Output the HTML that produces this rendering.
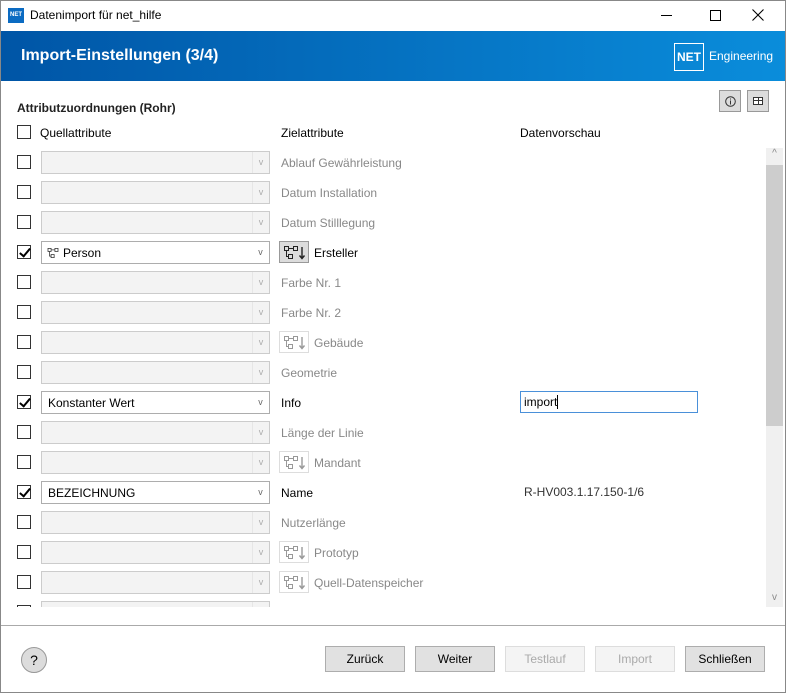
<!DOCTYPE html>
<html><head><meta charset="utf-8"><style>
*{box-sizing:border-box;margin:0;padding:0}
html,body{width:786px;height:693px;overflow:hidden}
body{position:relative;background:#fff;font-family:"Liberation Sans",sans-serif;font-size:12px;color:#000}
.a{position:absolute}
.win{left:0;top:0;width:786px;height:693px;border:1px solid #888}
.cb{position:absolute;left:17px;width:14px;height:14px;border:1px solid #333;background:#fff}
.cb.on::after{content:"";position:absolute;left:4px;top:0px;width:4px;height:9px;border:solid #000;border-width:0 2px 2px 0;transform:rotate(40deg)}
.combo{position:absolute;left:41px;width:229px;height:23px;border:1px solid #ccc;background:#f3f3f3}
.combo .arr{position:absolute;right:0;top:0;width:17px;height:21px;border-left:1px solid #e6e6e6;color:#aaa;font-size:9px;text-align:center;line-height:21px}
.combo.en{border-color:#adadad;background:#fff}
.combo.en .arr{border-left:none;color:#666}
.combo span.t{position:absolute;left:6px;top:4px;font-size:12px}
.lbl{position:absolute;font-size:12px;color:#888}
.lbl.en{color:#000}
.ib{position:absolute;left:279px;width:30px;height:22px;border:1px solid #ddd;background:#fff}
.ib.en{border-color:#999;background:#dcdcdc}
.btn{position:absolute;top:646px;width:80px;height:26px;border:1px solid #adadad;background:#e1e1e1;text-align:center;line-height:24px;font-size:12px}
.btn.dis{background:#f4f4f4;border-color:#ddd;color:#aaa}
</style></head><body>
<div class="a win"></div>
<div class="a" style="left:8px;top:8px;width:16px;height:15px;background:#0b6bc2;color:#fff;font-size:6px;font-weight:bold;line-height:15px;text-align:center">NET</div>
<div class="a" style="left:30px;top:8px;font-size:12px">Datenimport für net_hilfe</div>
<div class="a" style="left:661px;top:15px;width:11px;height:1px;background:#000"></div>
<div class="a" style="left:710px;top:10px;width:11px;height:11px;border:1px solid #000"></div>
<svg class="a" style="left:752px;top:9px" width="12" height="12"><path d="M0.5 0.5L11.5 11.5M11.5 0.5L0.5 11.5" stroke="#000" stroke-width="1.1"/></svg>
<div class="a" style="left:1px;top:31px;width:784px;height:50px;background:linear-gradient(90deg,#0055a6,#0a8ddb)"></div>
<div class="a" style="left:21px;top:47px;color:#fff;font-size:16px;font-weight:bold">Import-Einstellungen (3/4)</div>
<div class="a" style="left:674px;top:43px;width:30px;height:28px;border:1px solid #fff;color:#fff;font-weight:bold;font-size:12px;text-align:center;line-height:26px">NET</div>
<div class="a" style="left:709px;top:49px;color:#fff;font-size:12px">Engineering</div>
<div class="a" style="left:17px;top:101px;font-weight:bold;font-size:12px;color:#222">Attributzuordnungen (Rohr)</div>
<div class="a" style="left:719px;top:90px;width:22px;height:22px;border:1px solid #999;background:#dcdcdc"><svg class="a" style="left:5px;top:5px" width="11" height="11"><circle cx="5.5" cy="5.5" r="4.8" fill="none" stroke="#333"/><path d="M5.5 4.5V8.5M5.5 2.5V3.5" stroke="#333"/></svg></div>
<div class="a" style="left:747px;top:90px;width:22px;height:22px;border:1px solid #999;background:#dcdcdc"><div class="a" style="left:5px;top:6px;width:10px;height:8px;border:1px solid #333;background:linear-gradient(#333,#333) 4px 0/1px 8px no-repeat,linear-gradient(#333,#333) 0 2px/10px 1px no-repeat,#fff"></div></div>
<div class="cb" style="top:125px"></div>
<div class="a" style="left:40px;top:126px">Quellattribute</div>
<div class="a" style="left:281px;top:126px">Zielattribute</div>
<div class="a" style="left:520px;top:126px">Datenvorschau</div>
<div class="a" style="left:766px;top:148px;width:17px;height:459px;background:#f0f0f0"></div>
<div class="a" style="left:766px;top:165px;width:17px;height:261px;background:#cdcdcd"></div>
<div class="a" style="left:766px;top:148px;width:17px;text-align:center;color:#888;font-size:10px">^</div>
<div class="a" style="left:766px;top:592px;width:17px;text-align:center;color:#888;font-size:10px">v</div>
<div class="a" style="left:0;top:148px;width:766px;height:459px;overflow:hidden">
<div class="a" style="left:0;top:-148px;width:766px;height:640px">
<svg width="0" height="0" style="position:absolute"><defs><g id="hi"><rect x="0.5" y="0.5" width="4" height="4" fill="none" stroke="currentColor"/><rect x="9.5" y="0.5" width="4" height="4" fill="none" stroke="currentColor"/><rect x="4.5" y="8.5" width="4" height="4" fill="none" stroke="currentColor"/><path d="M4.5 2.5H9.5M2.5 4.5V10.5H4.5" fill="none" stroke="currentColor"/><path d="M18 1V12M15.5 9.5L18 12.5L20.5 9.5" fill="none" stroke="currentColor" stroke-width="1.4"/></g></defs></svg>
<div class="cb" style="top:155px"></div><div class="combo" style="top:151px"><div class="arr">v</div></div><div class="lbl" style="left:281px;top:156px">Ablauf Gewährleistung</div>
<div class="cb" style="top:185px"></div><div class="combo" style="top:181px"><div class="arr">v</div></div><div class="lbl" style="left:281px;top:186px">Datum Installation</div>
<div class="cb" style="top:215px"></div><div class="combo" style="top:211px"><div class="arr">v</div></div><div class="lbl" style="left:281px;top:216px">Datum Stilllegung</div>
<div class="cb on" style="top:245px"></div><div class="combo en" style="top:241px"><svg class="a" style="left:5px;top:6px;color:#333" width="12" height="10" viewBox="0 0 14 13"><rect x="0.5" y="0.5" width="4" height="4" fill="none" stroke="currentColor"/><rect x="9.5" y="0.5" width="4" height="4" fill="none" stroke="currentColor"/><rect x="4.5" y="8.5" width="4" height="4" fill="none" stroke="currentColor"/><path d="M4.5 2.5H9.5M2.5 4.5V10.5H4.5" fill="none" stroke="currentColor"/></svg><span class="t" style="left:21px">Person</span><div class="arr">v</div></div>
<div class="ib en" style="top:241px"><svg class="a" style="left:4px;top:4px;color:#222" width="22" height="14"><use href="#hi"/></svg></div><div class="lbl en" style="left:314px;top:246px">Ersteller</div>
<div class="cb" style="top:275px"></div><div class="combo" style="top:271px"><div class="arr">v</div></div><div class="lbl" style="left:281px;top:276px">Farbe Nr. 1</div>
<div class="cb" style="top:305px"></div><div class="combo" style="top:301px"><div class="arr">v</div></div><div class="lbl" style="left:281px;top:306px">Farbe Nr. 2</div>
<div class="cb" style="top:335px"></div><div class="combo" style="top:331px"><div class="arr">v</div></div><div class="ib" style="top:331px"><svg class="a" style="left:4px;top:4px;color:#999" width="22" height="14"><use href="#hi"/></svg></div><div class="lbl" style="left:314px;top:336px">Gebäude</div>
<div class="cb" style="top:365px"></div><div class="combo" style="top:361px"><div class="arr">v</div></div><div class="lbl" style="left:281px;top:366px">Geometrie</div>
<div class="cb on" style="top:395px"></div><div class="combo en" style="top:391px"><span class="t">Konstanter Wert</span><div class="arr">v</div></div><div class="lbl en" style="left:281px;top:396px">Info</div>
<div class="a" style="left:520px;top:391px;width:178px;height:22px;border:1px solid #4a90d9;background:#fff;padding:3px 3px">import<span style="border-left:1px solid #000"></span></div>
<div class="cb" style="top:425px"></div><div class="combo" style="top:421px"><div class="arr">v</div></div><div class="lbl" style="left:281px;top:426px">Länge der Linie</div>
<div class="cb" style="top:455px"></div><div class="combo" style="top:451px"><div class="arr">v</div></div><div class="ib" style="top:451px"><svg class="a" style="left:4px;top:4px;color:#999" width="22" height="14"><use href="#hi"/></svg></div><div class="lbl" style="left:314px;top:456px">Mandant</div>
<div class="cb on" style="top:485px"></div><div class="combo en" style="top:481px"><span class="t">BEZEICHNUNG</span><div class="arr">v</div></div><div class="lbl en" style="left:281px;top:486px">Name</div>
<div class="a" style="left:524px;top:485px;color:#333">R-HV003.1.17.150-1/6</div>
<div class="cb" style="top:515px"></div><div class="combo" style="top:511px"><div class="arr">v</div></div><div class="lbl" style="left:281px;top:516px">Nutzerlänge</div>
<div class="cb" style="top:545px"></div><div class="combo" style="top:541px"><div class="arr">v</div></div><div class="ib" style="top:541px"><svg class="a" style="left:4px;top:4px;color:#999" width="22" height="14"><use href="#hi"/></svg></div><div class="lbl" style="left:314px;top:546px">Prototyp</div>
<div class="cb" style="top:575px"></div><div class="combo" style="top:571px"><div class="arr">v</div></div><div class="ib" style="top:571px"><svg class="a" style="left:4px;top:4px;color:#999" width="22" height="14"><use href="#hi"/></svg></div><div class="lbl" style="left:314px;top:576px">Quell-Datenspeicher</div>
<div class="cb" style="top:605px"></div><div class="combo" style="top:601px"><div class="arr">v</div></div>
</div></div>
<div class="a" style="left:1px;top:625px;width:784px;height:1px;background:#aaa"></div>
<div class="a" style="left:21px;top:647px;width:26px;height:26px;border-radius:50%;border:1px solid #999;background:#dcdcdc;text-align:center;line-height:24px;font-size:14px">?</div>
<div class="btn" style="left:325px">Zurück</div>
<div class="btn" style="left:415px">Weiter</div>
<div class="btn dis" style="left:505px">Testlauf</div>
<div class="btn dis" style="left:595px">Import</div>
<div class="btn" style="left:685px">Schließen</div>
</body></html>
